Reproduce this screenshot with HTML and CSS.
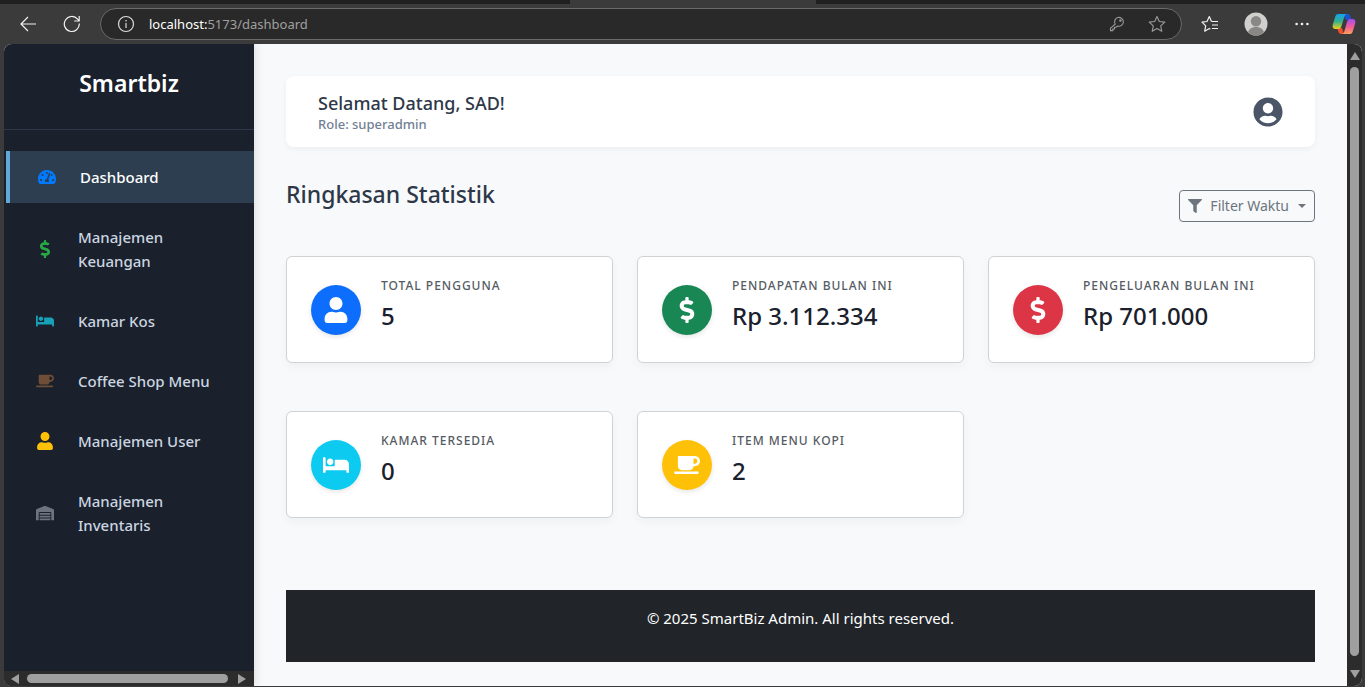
FILE: index.html
```html
<!DOCTYPE html>
<html lang="id">
<head>
<meta charset="utf-8">
<meta name="viewport" content="width=device-width, initial-scale=1">
<title>Smartbiz</title>
<link rel="stylesheet" href="styles.css">
</head>
<body>
<svg class="sprite" aria-hidden="true">
  <symbol id="i-user" viewBox="0 0 448 512"><path d="M224 256c70.7 0 128-57.3 128-128S294.7 0 224 0 96 57.3 96 128s57.3 128 128 128zm89.6 32h-16.7c-22.2 10.2-46.9 16-72.9 16s-50.6-5.8-72.9-16h-16.7C60.2 288 0 348.2 0 422.4V464c0 26.5 21.5 48 48 48h352c26.5 0 48-21.5 48-48v-41.6c0-74.2-60.2-134.4-134.4-134.4z"/></symbol>
  <symbol id="i-dollar" viewBox="0 0 288 512"><path d="M209.2 233.4l-108-31.6C88.7 198.2 80 186.5 80 173.5c0-16.3 13.2-29.5 29.5-29.5h66.3c12.2 0 24.2 3.7 34.2 10.5 6.1 4.1 14.3 3.1 19.5-2l34.8-34c7.1-6.9 6.1-18.4-1.8-24.5C238 74.8 207.4 64.1 176 64V16c0-8.8-7.2-16-16-16h-32c-8.8 0-16 7.2-16 16v48h-2.5C45.8 64-5.4 118.7.5 183.6c4.2 46.1 39.4 83.6 83.8 96.6l102.5 30c12.5 3.7 21.2 15.3 21.2 28.3 0 16.3-13.2 29.5-29.5 29.5h-66.3C100 368 88 364.3 78 357.5c-6.1-4.1-14.3-3.1-19.5 2l-34.8 34c-7.1 6.9-6.1 18.4 1.8 24.5 24.5 19.2 55.1 29.9 86.5 30v48c0 8.8 7.2 16 16 16h32c8.8 0 16-7.2 16-16v-48.2c46.6-.9 90.3-28.6 105.7-72.7 21.5-61.6-14.6-124.8-72.5-141.7z"/></symbol>
  <symbol id="i-bed" viewBox="0 0 640 512"><path d="M176 256c44.11 0 80-35.89 80-80s-35.89-80-80-80-80 35.89-80 80 35.89 80 80 80zm352-128H304c-8.84 0-16 7.16-16 16v144H64V80c0-8.84-7.16-16-16-16H16C7.16 64 0 71.16 0 80v352c0 8.84 7.16 16 16 16h32c8.84 0 16-7.16 16-16v-48h512v48c0 8.84 7.16 16 16 16h32c8.84 0 16-7.16 16-16V240c0-61.86-50.14-112-112-112z"/></symbol>
  <symbol id="i-coffee" viewBox="0 0 640 512"><path d="M192 384h192c53 0 96-43 96-96h32c70.6 0 128-57.4 128-128S582.6 32 512 32H120c-13.3 0-24 10.7-24 24v232c0 53 43 96 96 96zM512 96c35.3 0 64 28.7 64 64s-28.7 64-64 64h-32V96h32zm47.7 384H48.3c-47.6 0-61-64-36-64h583.3c25 0 11.8 64-35.9 64z"/></symbol>
  <symbol id="i-gauge" viewBox="0 0 576 512"><path d="M288 32C128.94 32 0 160.94 0 320c0 52.8 14.25 102.26 39.06 144.8 5.61 9.62 16.3 15.2 27.44 15.2h443c11.14 0 21.83-5.58 27.44-15.2C561.75 422.26 576 372.8 576 320c0-159.06-128.94-288-288-288zm0 64c14.71 0 26.58 10.13 30.32 23.65-1.11 2.26-2.64 4.23-3.45 6.67l-9.22 27.67c-5.13 3.49-10.97 6.01-17.64 6.01-17.67 0-32-14.33-32-32S270.33 96 288 96zM96 384c-17.67 0-32-14.33-32-32s14.33-32 32-32 32 14.33 32 32-14.33 32-32 32zm48-160c-17.67 0-32-14.33-32-32s14.33-32 32-32 32 14.33 32 32-14.33 32-32 32zm246.77-72.41l-61.33 184C343.13 347.33 352 364.54 352 384c0 11.72-3.38 22.55-8.88 32H232.88c-5.5-9.45-8.88-20.28-8.88-32 0-33.94 26.5-61.43 59.9-63.59l61.34-184.01c4.17-12.56 17.73-19.45 30.36-15.17 12.57 4.19 19.35 17.79 15.17 30.36zm14.66 57.2l15.52-46.55c3.47-1.29 7.13-2.23 11.05-2.23 17.67 0 32 14.33 32 32s-14.33 32-32 32c-11.38-.01-20.89-6.28-26.57-15.22zM480 384c-17.67 0-32-14.33-32-32s14.33-32 32-32 32 14.33 32 32-14.33 32-32 32z"/></symbol>
  <symbol id="i-warehouse" viewBox="0 0 640 512"><path d="M504 352H136.4c-4.4 0-8 3.6-8 8l-.1 48c0 4.4 3.6 8 8 8H504c4.4 0 8-3.6 8-8v-48c0-4.4-3.6-8-8-8zm0 96H136.1c-4.4 0-8 3.6-8 8l-.1 48c0 4.4 3.6 8 8 8h368c4.4 0 8-3.6 8-8v-48c0-4.4-3.6-8-8-8zm0-192H136.6c-4.4 0-8 3.6-8 8l-.1 48c0 4.4 3.6 8 8 8H504c4.4 0 8-3.6 8-8v-48c0-4.4-3.6-8-8-8zm106.5-139L338.4 3.7a48.15 48.15 0 0 0-36.9 0L29.5 117C11.7 124.5 0 141.9 0 161.3V504c0 4.4 3.6 8 8 8h80c4.4 0 8-3.6 8-8V256c0-17.6 14.6-32 32.6-32h382.8c18 0 32.6 14.4 32.6 32v248c0 4.4 3.6 8 8 8h80c4.4 0 8-3.6 8-8V161.3c0-19.4-11.7-36.8-29.5-44.3z"/></symbol>
</svg>

<div class="browser">
  <div class="tabstrip"><div class="tab"></div></div>
  <div class="toolbar">
    <button class="tool" type="button" aria-label="Back"><svg width="18" height="16" viewBox="0 0 18 16" fill="none" stroke="#f2f2f2" stroke-width="1.2"><path d="M17 8H2M9 1L2 8l7 7"/></svg></button>
    <button class="tool" type="button" aria-label="Refresh"><svg width="18" height="18" viewBox="0 0 18 18" fill="none" stroke="#f2f2f2" stroke-width="1.2"><path d="M16.3 8.5A7.5 7.5 0 1 1 14.6 4.2L16 5.6M16.2 1v5h-5"/></svg></button>
    <div class="address">
      <svg width="18" height="18" viewBox="0 0 18 18" fill="none" stroke="#dcdcdc" stroke-width="1.2"><circle cx="9" cy="9" r="7.5"/><path d="M9 8v5M9 5v1.4"/></svg>
      <span class="url"><b>localhost:</b>5173/dashboard</span>
      <svg width="16" height="16" viewBox="0 0 16 16" fill="none" stroke="#9b9b9b" stroke-width="1.1"><path d="M6.2 8.1A4.4 4.4 0 1 1 8.600 10L7 11.200H5.500V13H3.800v1.600H1.500v-2.400z"/><circle cx="11.400" cy="4.600" r=".7"/></svg>
      <svg class="star" width="18" height="18" viewBox="0 0 18 18" fill="none" stroke="#9b9b9b" stroke-width="1.1" stroke-linejoin="round"><path d="M9 1.500l2.300 5 5.500.6-4.100 3.700 1.100 5.500L9 13.600l-4.800 2.700 1.100-5.500L1.200 7.100l5.500-.6z"/></svg>
    </div>
    <div class="actions">
      <button class="tool" type="button" aria-label="Favorites"><svg width="18" height="18" viewBox="0 0 18 18" fill="none" stroke="#f2f2f2" stroke-width="1.2" stroke-linejoin="round"><path d="M10.500 6.500L8.300 1.500 6 6.500l-5 .6 3.700 3.700-1 5.400 4.600-2.600 1 .6M10.500 6.500H17M11 10h6M11 13.500h6"/></svg></button>
      <button class="tool" type="button" aria-label="Profile"><svg width="24" height="24" viewBox="0 0 24 24"><circle cx="12" cy="12" r="11.500" fill="#d2d0ce"/><circle cx="12" cy="9.300" r="5.200" fill="#8a8886"/><path d="M4 20.200c1-3.400 4.200-5.200 8-5.200s7 1.800 8 5.200a11.500 11.500 0 0 1-16 0z" fill="#8a8886"/></svg></button>
      <button class="tool" type="button" aria-label="More"><svg width="14" height="4" viewBox="0 0 14 4" fill="#f2f2f2"><circle cx="1.600" cy="2" r="1.300"/><circle cx="7" cy="2" r="1.300"/><circle cx="12.400" cy="2" r="1.300"/></svg></button>
    </div>
    <button class="tool" type="button" aria-label="Copilot"><svg width="24" height="22" viewBox="0 0 24 22">
      <defs>
        <linearGradient id="ga" x1="0" y1="0" x2="0" y2="1"><stop offset="0" stop-color="#12a5ee"/><stop offset=".5" stop-color="#35b08a"/><stop offset="1" stop-color="#f0d21c"/></linearGradient>
        <linearGradient id="gb" x1="0" y1="0" x2="0" y2="1"><stop offset="0" stop-color="#a44cf0"/><stop offset=".5" stop-color="#ee5a9a"/><stop offset="1" stop-color="#fda05a"/></linearGradient>
      </defs>
      <path d="M11 1h5c1.500 0 2 1 2.500 2.500L19.500 7H14z" fill="#1d52cf"/>
      <path d="M5 15h5l2 6H9c-1.500 0-2.200-1-2.700-2.500z" fill="#f0502c"/>
      <path d="M6.500 1H15c-1.500.3-2.200 1.200-2.700 2.800L9.500 13c-.6 2-1.500 3-3.500 3H3.500C1 16 0 14 .8 11.400L3.300 3.600C3.900 1.800 4.800 1 6.500 1z" fill="url(#ga)"/>
      <path d="M17.500 21H9.800c1.400-.3 2.100-1.300 2.600-2.800L15 9c.6-2 1.500-3 3.500-3h2c2.500 0 3.500 2 2.700 4.600l-2.500 7.800c-.6 1.800-1.500 2.600-3.200 2.600z" fill="url(#gb)"/>
    </svg></button>
  </div>

  <div class="viewport">
    <aside class="sidebar">
      <h2 class="brand">Smartbiz</h2>
      <nav class="menu">
        <a class="link active" href="#"><svg class="c-blue"><use href="#i-gauge"/></svg><span>Dashboard</span></a>
        <a class="link" href="#"><svg class="c-green"><use href="#i-dollar"/></svg><span>Manajemen Keuangan</span></a>
        <a class="link" href="#"><svg class="c-teal"><use href="#i-bed"/></svg><span>Kamar Kos</span></a>
        <a class="link" href="#"><svg class="c-brown"><use href="#i-coffee"/></svg><span>Coffee Shop Menu</span></a>
        <a class="link" href="#"><svg class="c-yellow"><use href="#i-user"/></svg><span>Manajemen User</span></a>
        <a class="link" href="#"><svg class="c-gray"><use href="#i-warehouse"/></svg><span>Manajemen Inventaris</span></a>
      </nav>
      <div class="hscroll">
        <svg width="8" height="10" viewBox="0 0 8 10"><path d="M8 0v10L0 5z"/></svg>
        <div class="thumb"></div>
        <svg width="8" height="10" viewBox="0 0 8 10"><path d="M0 0v10l8-5z"/></svg>
      </div>
    </aside>

    <main class="main">
      <header class="welcome">
        <div>
          <h1 class="hello">Selamat Datang, SAD!</h1>
          <p class="role">Role: superadmin</p>
        </div>
        <svg class="avatar" viewBox="0 0 496 512" role="img" aria-label="Profil"><path d="M248 8C111 8 0 119 0 256s111 248 248 248 248-111 248-248S385 8 248 8zm0 96c48.6 0 88 39.4 88 88s-39.4 88-88 88-88-39.4-88-88 39.4-88 88-88zm0 344c-58.7 0-111.3-26.6-146.5-68.2 18.8-35.4 55.6-59.8 98.5-59.8 2.4 0 4.8.4 7.1 1.1 13 4.2 26.6 6.900 40.900 6.900 14.300 0 28-2.700 40.900-6.900 2.300-.7 4.700-1.100 7.100-1.100 42.900 0 79.700 24.400 98.500 59.800C359.300 421.400 306.700 448 248 448z"/></svg>
      </header>

      <div class="section-head">
        <h2 class="section-title">Ringkasan Statistik</h2>
        <button class="filter" type="button">
          <svg width="14" height="14" viewBox="0 0 512 512"><path d="M487.976 0H24.028C2.71 0-8.047 25.866 7.058 40.971L192 225.941V432c0 7.831 3.821 15.17 10.237 19.662l80 55.98C298.02 518.69 320 507.493 320 487.98V225.941l184.947-184.97C520.021 25.896 509.338 0 487.976 0z"/></svg>
          <span>Filter Waktu</span><i class="caret"></i>
        </button>
      </div>

      <section class="cards">
        <article class="card"><div class="disc blue"><svg><use href="#i-user"/></svg></div><div><h3 class="label">Total Pengguna</h3><p class="value">5</p></div></article>
        <article class="card"><div class="disc green"><svg><use href="#i-dollar"/></svg></div><div><h3 class="label">Pendapatan Bulan Ini</h3><p class="value">Rp 3.112.334</p></div></article>
        <article class="card"><div class="disc red"><svg><use href="#i-dollar"/></svg></div><div><h3 class="label">Pengeluaran Bulan Ini</h3><p class="value">Rp 701.000</p></div></article>
        <article class="card"><div class="disc cyan"><svg><use href="#i-bed"/></svg></div><div><h3 class="label">Kamar Tersedia</h3><p class="value">0</p></div></article>
        <article class="card"><div class="disc yellow"><svg><use href="#i-coffee"/></svg></div><div><h3 class="label">Item Menu Kopi</h3><p class="value">2</p></div></article>
      </section>

      <footer class="footer">© 2025 SmartBiz Admin. All rights reserved.</footer>
    </main>

    <div class="vscroll">
      <svg width="10" height="8" viewBox="0 0 10 8"><path d="M0 8h10L5 0z"/></svg>
      <div class="thumb"></div>
      <svg width="10" height="8" viewBox="0 0 10 8"><path d="M0 0h10L5 8z"/></svg>
    </div>
  </div>
</div>
</body>
</html>
```

FILE: styles.css
```css
* { box-sizing: border-box; }

body {
  margin: 0;
  background: #3b3b3b;
  font-family: "Segoe UI", "Noto Sans", "Open Sans", sans-serif;
  font-size: 15px;
  line-height: 24px;
  color: #212529;
}

h1, h2, h3, p { margin: 0; }
svg { flex: none; display: block; }
.sprite { position: absolute; width: 0; height: 0; }

.browser {
  display: flex;
  flex-direction: column;
  min-height: 100vh;
}

/* Browser chrome */
.tabstrip {
  height: 4px;
  background: #202020;
  padding-left: 570px;
}
.tab {
  width: 246px;
  height: 4px;
  background: #3b3b3b;
}
.toolbar {
  display: flex;
  align-items: center;
  height: 40px;
  padding: 0 5px 0 12px;
  gap: 12px;
}
.tool {
  flex: none;
  display: flex;
  align-items: center;
  justify-content: center;
  width: 32px;
  height: 32px;
  padding: 0;
  border: 0;
  background: none;
}
.actions { display: flex; gap: 14px; margin-right: -2px; }
.address {
  flex: 1;
  display: flex;
  align-items: center;
  height: 32px;
  padding: 0 15px 0 16px;
  border: 1px solid #6a6a6a;
  border-radius: 16px;
  background: #292929;
}
.address .star { margin-left: 23px; }
.url {
  flex: 1;
  margin-left: 14px;
  font-size: 13px;
  color: #a0a0a0;
}
.url b { font-weight: 400; color: #fff; }

.viewport {
  flex: 1;
  display: flex;
  margin: 0 3px 1px 4px;
  border-radius: 8px;
  overflow: hidden;
  background: #f8f9fb;
}

/* Sidebar */
.sidebar {
  flex: none;
  display: flex;
  flex-direction: column;
  width: 250px;
  background: #1a202c;
  box-shadow: 2px 0 8px rgba(0, 0, 0, .1);
}
.brand {
  height: 86px;
  padding-top: 23px;
  border-bottom: 1px solid #2d3748;
  text-align: center;
  font-size: 23px;
  line-height: 32px;
  font-weight: 600;
  color: #fff;
}
.menu {
  flex: 1;
  display: flex;
  flex-direction: column;
  gap: 8px;
  padding-top: 21px;
}
.link {
  display: flex;
  align-items: center;
  gap: 24px;
  padding: 14px 20px 14px 28px;
  border-left: 4px solid transparent;
  font-weight: 500;
  color: #cbd5e0;
  text-decoration: none;
}
.link svg { width: 18px; height: 18px; fill: currentColor; }
.link.active {
  margin-left: 2px;
  border-left-color: #63a9d8;
  background: #2d3e50;
}
.link.active span { color: #fff; }
.c-blue { color: #007bff; }
.c-green { color: #28a745; }
.c-teal { color: #17a2b8; }
.c-brown { color: #6f4e37; }
.c-yellow { color: #ffc107; }
.c-gray { color: #6c757d; }

/* Scrollbars */
.hscroll, .vscroll {
  display: flex;
  align-items: center;
  background: #2c2c2c;
  fill: #9f9f9f;
}
.hscroll { height: 15px; padding: 0 8px 0 7px; gap: 8px; }
.vscroll { flex: none; flex-direction: column; width: 15px; padding: 8px 0; gap: 7px; }
.thumb { flex: 1; border-radius: 5px; background: #9f9f9f; }
.hscroll .thumb { height: 9px; margin-right: 2px; }
.vscroll .thumb { width: 9px; margin-bottom: 7px; }

/* Main column */
.main {
  flex: 1;
  min-width: 0;
  padding: 32px 32px 24px;
}
.welcome {
  display: flex;
  align-items: center;
  justify-content: space-between;
  padding: 15px 32px 14px;
  border-radius: 8px;
  background: #fff;
  box-shadow: 0 2px 6px rgba(0, 0, 0, .05);
}
.hello {
  font-size: 18px;
  line-height: 24px;
  font-weight: 500;
  color: #2d3748;
}
.role {
  font-size: 13px;
  line-height: 18px;
  font-weight: 500;
  color: #718096;
}
.avatar { width: 30px; height: 30px; fill: #4a5568; }

.section-head {
  display: flex;
  align-items: flex-end;
  justify-content: space-between;
  height: 43px;
  margin: 32px 0 34px;
}
.section-title {
  align-self: flex-start;
  font-size: 23px;
  line-height: 30px;
  font-weight: 500;
  color: #2d3748;
}
.filter {
  display: flex;
  align-items: center;
  gap: 8px;
  height: 32px;
  padding: 0 8px;
  border: 1px solid #6c757d;
  border-radius: 4px;
  background: none;
  color: #6c757d;
  fill: currentColor;
  font: inherit;
  font-size: 14px;
}
.caret {
  margin-left: 1px;
  border: 4px solid transparent;
  border-top-color: currentColor;
  border-bottom: 0;
}

.cards {
  display: grid;
  grid-template-columns: repeat(3, 1fr);
  gap: 48px 24px;
}
.card {
  display: flex;
  align-items: center;
  gap: 20px;
  padding: 16px 24px;
  border: 1px solid #d0d2d4;
  border-radius: 6px;
  background: #fff;
  box-shadow: 0 4px 10px rgba(0, 0, 0, .04);
}
.disc {
  flex: none;
  display: grid;
  place-items: center;
  width: 50px;
  height: 50px;
  border-radius: 50%;
  box-shadow: 0 2px 5px rgba(0, 0, 0, .1);
}
.disc svg { width: 26px; height: 26px; fill: #fff; }
.blue { background: #0d6efd; }
.green { background: #198754; }
.red { background: #dc3545; }
.cyan { background: #0dcaf0; }
.yellow { background: #ffc107; }
.label {
  font-size: 12px;
  line-height: 26px;
  font-weight: 500;
  letter-spacing: 1px;
  text-transform: uppercase;
  color: #555b62;
}
.value {
  margin-bottom: 13px;
  font-size: 24px;
  line-height: 34px;
  font-weight: 500;
  color: #1a202c;
}

.footer {
  height: 72px;
  margin-top: 72px;
  padding: 16px;
  background: #212529;
  color: #fff;
  text-align: center;
}
```
